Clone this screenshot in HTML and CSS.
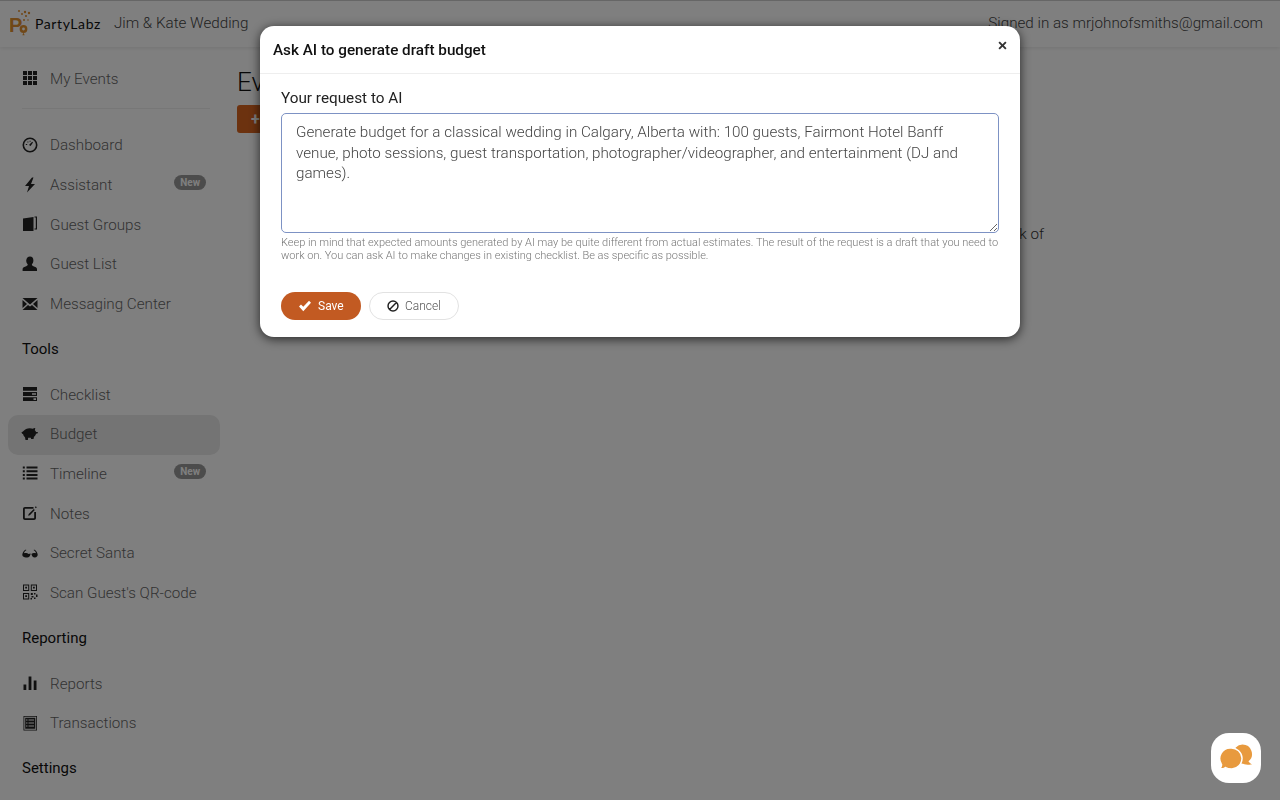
FILE: index.html
```html
<!DOCTYPE html>
<html>
<head>
    <title>PartyLabz - Budget</title>
    <link rel="stylesheet" href="styles.css">
</head>
<body>
    <header class="topbar">
        <div class="brand">
            <svg class="brand-logo" viewBox="0 0 24 28" width="24" height="28">
                <text x="-1" y="23" class="brand-p">P</text>
                <circle cx="13.500" cy="20" r="3.900" fill="#e09030"/>
                <circle cx="13.500" cy="20" r="1.400" fill="#fff"/>
                <path d="M13.500 23.500l-1.200 2.800h2.400z" fill="#e09030"/>
                <circle cx="9" cy="2" r="1" fill="#e09030"/>
                <circle cx="12" cy="5" r="1" fill="#e09030"/>
                <circle cx="15" cy="3" r="1.200" fill="#e09030"/>
                <circle cx="19" cy="4" r="1.200" fill="#e09030"/>
                <circle cx="16" cy="7" r="1.100" fill="#e09030"/>
                <circle cx="14" cy="11" r="1" fill="#e09030"/>
                <circle cx="18" cy="11" r="0.800" fill="#e09030"/>
            </svg>
            <span class="brand-name">PartyLabz</span>
        </div>
        <div class="event-name">Jim &amp; Kate Wedding</div>
        <div class="signed-in">Signed in as mrjohnofsmiths@gmail.com</div>
    </header>

    <div class="layout">
        <nav class="sidebar">
            <a class="nav-item">
                <svg class="nav-icon" viewBox="0 0 16 16"><path d="M1 1h4v4H1zM6 1h4v4H6zM11 1h4v4h-4zM1 6h4v4H1zM6 6h4v4H6zM11 6h4v4h-4zM1 11h4v4H1zM6 11h4v4H6zM11 11h4v4h-4z"/></svg>
                My Events
            </a>
            <hr class="nav-divider">
            <a class="nav-item">
                <svg class="nav-icon" viewBox="0 0 16 16"><path fill-rule="evenodd" d="M8 .5a7.500 7.500 0 1 1 0 15A7.500 7.500 0 0 1 8 .5zm0 1.600a5.900 5.900 0 1 0 0 11.800A5.900 5.900 0 0 0 8 2.100z"/><path d="M7 8l3.200-3.200.8.6L8.600 9zM3.800 7h1.400v1H3.800zM5.400 4.600h1v1h-1zM7.600 3.800h1v1h-1z"/></svg>
                Dashboard
            </a>
            <a class="nav-item">
                <svg class="nav-icon" viewBox="0 0 16 16"><path d="M10 .5L3 9h4L5 15.500l8-8.500H9l2.500-6.500z"/></svg>
                Assistant
                <span class="nav-badge">New</span>
            </a>
            <a class="nav-item">
                <svg class="nav-icon" viewBox="0 0 16 16"><path d="M1 2.500L11.500 1v14H1zM12.500 .5h2.500v13h-2.500v-1h1.300V1.500h-1.300z"/></svg>
                Guest Groups
            </a>
            <a class="nav-item">
                <svg class="nav-icon" viewBox="0 0 16 16"><path d="M8 .5c2.200 0 3.400 1.600 3.400 3.900 0 1.500-.6 3-1.500 3.900 0 1 .4 1.500 1.500 2 1.700.7 3.600 1.200 3.600 2.600V15H.6v-2.100c0-1.400 1.900-1.900 3.600-2.600 1.100-.5 1.500-1 1.500-2-.9-.9-1.500-2.400-1.500-3.900C4.600 2.100 5.800.5 8 .5z"/></svg>
                Guest List
            </a>
            <a class="nav-item">
                <svg class="nav-icon" viewBox="0 0 16 16"><path d="M.5 2h15L8 8.500zM.5 4L5 8 .5 12zM15.500 4L11 8l4.500 4zM6 8.900l2 1.600 2-1.600 5.500 5.100H.5z"/></svg>
                Messaging Center
            </a>

            <div class="nav-heading">Tools</div>
            <a class="nav-item">
                <svg class="nav-icon" viewBox="0 0 16 16"><path fill-rule="evenodd" d="M1 1h14v3.800H1zM1 6.100h14v3.800H1zM1 11.200h14v3.800H1zM10 7.200v1.600h4V7.200zM11.500 12.300v1.600H14v-1.600z"/></svg>
                Checklist
            </a>
            <a class="nav-item active">
                <svg class="nav-icon nav-icon-wide" viewBox="0 0 18 16"><path d="M.5 6.200c.8 0 1.400-.4 2-1.100C3.800 3.300 6 2.200 8.800 2.200c1.200 0 2.200.2 3 .5.700-.6 1.700-.9 2.500-.8l-.5 2.300c.7.600 1 1.100 1.200 1.800h1.800v1.200l-1.800.6c-.3 1.300-1.100 2.300-2 2.900l-.5 2.300h-2.400l-.2-1.300c-.8.200-1.900.2-2.800 0L6.900 14H4.500L4 11.200C2.900 10.400 2.300 9.300 2.100 8 1.400 8 .7 7.300.5 6.200z"/></svg>
                Budget
            </a>
            <a class="nav-item">
                <svg class="nav-icon" viewBox="0 0 16 16"><path d="M.8 1.500h2v2h-2zM4.500 1.500H15.500v2H4.500zM.8 5.200h2v2h-2zM4.500 5.200H15.500v2H4.500zM.8 8.900h2v2h-2zM4.500 8.900H15.500v2H4.500zM.8 12.600h2v2h-2zM4.500 12.600H15.500v2H4.500z"/></svg>
                Timeline
                <span class="nav-badge">New</span>
            </a>
            <a class="nav-item">
                <svg class="nav-icon" viewBox="0 0 16 16"><path d="M3 2h8.500v1.800H3.200c-.3 0-.4.100-.4.400v8.600c0 .3.100.4.400.4h8.600c.3 0 .4-.1.400-.4V7H14v6c0 1.200-.8 2-2 2H3c-1.200 0-2-.8-2-2V4c0-1.200.8-2 2-2z"/><path d="M11.800 4l1 1-4.900 5.200-1.800.6.600-1.800zM13.800 1.300l1 1-.9.9-1-1z"/></svg>
                Notes
            </a>
            <a class="nav-item">
                <svg class="nav-icon" viewBox="0 0 16 16"><path d="M.3 9.500C.6 7.500 2 5 4 4.500l.3.800C3 5.800 2.300 7 2 8.200c1.500-.3 3.500-.2 4.500.8 1-.5 2-.5 3 0 1-1 3-1.100 4.500-.8-.3-1.200-1-2.400-2.300-2.900l.3-.8c2 .5 3.400 3 3.700 5 0 1.600-1 3-2.900 3-2 0-3.100-1.500-3.100-3.200-.5-.2-.9-.2-1.400 0 0 1.700-1.100 3.200-3.100 3.200C1.300 12.500.3 11.100.3 9.500z"/></svg>
                Secret Santa
            </a>
            <a class="nav-item">
                <svg class="nav-icon" viewBox="0 0 16 16"><path fill-rule="evenodd" d="M1 .5h6.200v6.500H1zM2 1.500V6h4.200V1.500zM3.200 2.800h1.800v1.800H3.200zM8.800 .5H15v6.500H8.800zM9.800 1.500V6H14V1.500zM11 2.800h1.800v1.800H11zM1 9h6.200v6.500H1zM2 10v4.500h4.200V10zM3.200 11.300h1.800v1.800H3.200zM8.800 9h2v2h-2zM12 9h1.500v1.500H12zM14 10.500h1.500V13H14zM9.500 12h2v1.500h-2zM12 13.500h1.500V15H12zM8.500 14h1.500v1.500H8.500z"/></svg>
                Scan Guest's QR-code
            </a>

            <div class="nav-heading">Reporting</div>
            <a class="nav-item">
                <svg class="nav-icon" viewBox="0 0 16 16"><path d="M1.500 9.500h2.800V15H1.500zM6.600 1.500h2.800V15H6.600zM11.700 5.500h2.800V15h-2.800z"/></svg>
                Reports
            </a>
            <a class="nav-item">
                <svg class="nav-icon" viewBox="0 0 16 16"><path fill-rule="evenodd" d="M1.500 1h13.500v14.500H1.500zM2.300 1.800v12.900h11.900V1.800zM3.200 2.800h10.100v11H3.200zM4 4.500v1h1.500v-1zM6.500 4.500v1H12v-1zM4 7.500v1h1.500v-1zM6.500 7.500v1H12v-1zM4 10.500v1h1.500v-1zM6.500 10.500v1H12v-1z"/></svg>
                Transactions
            </a>

            <div class="nav-heading">Settings</div>
        </nav>

        <main class="content">
            <h1 class="page-title">Event Budget</h1>
            <button class="add-btn">+ Add</button>
            <p class="empty-text">Ask AI to prepare a first draft or add your own items to keep track of</p>
        </main>
    </div>

    <div class="backdrop"></div>

    <div class="modal">
        <div class="modal-header">
            <h2 class="modal-title">Ask AI to generate draft budget</h2>
            <svg class="modal-close" viewBox="0 0 10 10" width="9" height="9"><path d="M2 .5L5 3.500 8 .5 9.500 2 6.500 5l3 3L8 9.500l-3-3-3 3L.5 8l3-3-3-3z"/></svg>
        </div>
        <div class="modal-body">
            <label class="field-label" for="request">Your request to AI</label>
            <textarea class="field-input" id="request">Generate budget for a classical wedding in Calgary, Alberta with: 100 guests, Fairmont Hotel Banff venue, photo sessions, guest transportation, photographer/videographer, and entertainment (DJ and games).</textarea>
            <p class="field-hint">Keep in mind that expected amounts generated by AI may be quite different from actual estimates. The result of the request is a draft that you need to work on. You can ask AI to make changes in existing checklist. Be as specific as possible.</p>
            <div class="modal-actions">
                <button class="btn btn-save">
                    <svg viewBox="0 0 16 14" width="14" height="12"><path d="M1 7.500L3.300 5.200 6 7.900 12.700 1 15 3.300 6 13z" fill="#fff"/></svg>
                    Save
                </button>
                <button class="btn btn-cancel">
                    <svg viewBox="0 0 14 14" width="12" height="12"><path fill="none" stroke="#222" stroke-width="1.700" d="M7 1.200a5.800 5.800 0 1 0 0 11.600A5.800 5.800 0 0 0 7 1.200zM3 11l8-8"/></svg>
                    Cancel
                </button>
            </div>
        </div>
    </div>

    <div class="chat-widget">
        <svg viewBox="0 0 34 28" width="34" height="28">
            <path d="M23.500 .5a9.500 9.500 0 0 1 6 16.800c.4 1 1.800 2.200 3.500 3.200-3 .3-6.500.1-9-.8a9.500 9.500 0 0 1-.5-19.200z" fill="#e89a3e"/>
            <path d="M12 4a10.500 10.500 0 0 1 1 21c-3 0-5-.5-6.500-1.500C5 24.500 3 25 .5 24.800c1.200-1 2.200-2.800 2-4.500A10.500 10.500 0 0 1 12 4z" fill="#e89a3e" stroke="#fff" stroke-width="1.500"/>
        </svg>
    </div>
</body>
</html>
```

FILE: styles.css
```css
* {
    box-sizing: border-box;
}

html, body {
    height: 100%;
}

body {
    margin: 0;
    font-family: Roboto, Arial, sans-serif;
    font-weight: 300;
    font-size: 15.2px;
    color: #222;
    background-color: #fff;
    overflow: hidden;
}

.topbar {
    display: flex;
    align-items: center;
    height: 47px;
    padding: 0 17px 2px 10px;
    background-color: #fff;
    border-top: 1px solid #ccc;
    box-shadow: 0 1px 4px rgba(0, 0, 0, 0.1);
}

.brand {
    display: flex;
    align-items: center;
}

.brand-logo {
    display: block;
}

.brand-p {
    font-family: "Liberation Sans", sans-serif;
    font-weight: 700;
    font-size: 20px;
    fill: #e09030;
}

.brand-name {
    margin-left: 1px;
    font-family: Lato, sans-serif;
    font-weight: 400;
    font-size: 14px;
    letter-spacing: 0.6px;
    color: #111;
}

.event-name {
    margin-left: 13px;
    color: #444;
}

.signed-in {
    margin-left: auto;
    color: #444;
}

.layout {
    display: flex;
}

.sidebar {
    width: 230px;
    flex-shrink: 0;
    padding: 13px 8px 0 8px;
    height: 753px;
    overflow: hidden;
}

.nav-item {
    position: relative;
    display: flex;
    align-items: center;
    width: 212px;
    height: 39.65px;
    padding: 0 0 2px 14px;
    color: #666;
    border-radius: 10px;
}

.nav-item.active {
    background-color: #e8e8e8;
}

.nav-icon {
    width: 16px;
    height: 16px;
    margin-right: 12px;
    margin-top: -1px;
    fill: #222;
    flex-shrink: 0;
}

.nav-icon-wide {
    width: 18px;
    margin-left: -1px;
    margin-right: 11px;
}

.nav-badge {
    position: absolute;
    right: 14px;
    top: 9px;
    padding: 0 6px;
    height: 15px;
    line-height: 15px;
    border-radius: 8px;
    background-color: #999;
    color: #fff;
    font-size: 10px;
    font-weight: 700;
}

.nav-divider {
    width: 188px;
    margin: 8px 0 18px 14px;
    border: none;
    border-top: 1px solid #eee;
}

.nav-heading {
    height: 51px;
    padding: 15px 0 0 14px;
    font-weight: 400;
    font-size: 15px;
    color: #111;
}

.content {
    flex: 1;
    padding: 18px 0 0 7px;
}

.page-title {
    margin: 0 0 6px 0;
    font-weight: 300;
    font-size: 26px;
    line-height: 34px;
    color: #111;
}

.add-btn {
    display: block;
    height: 28px;
    padding: 0 14px;
    border: none;
    border-radius: 3px;
    background-color: #d9641f;
    color: #fff;
    font-family: Roboto, Arial, sans-serif;
    font-weight: 700;
    font-size: 16px;
}

.empty-text {
    width: 807px;
    margin: 91px 0 0 0;
    text-align: right;
    line-height: 20px;
    color: #333;
}

.backdrop {
    position: fixed;
    left: 0;
    top: 0;
    right: 0;
    bottom: 0;
    background-color: rgba(0, 0, 0, 0.5);
}

.modal {
    position: fixed;
    left: 260px;
    top: 26px;
    width: 760px;
    background-color: #fff;
    border-radius: 14px;
    box-shadow: 0 2px 11px rgba(0, 0, 0, 0.7);
}

.modal-header {
    display: flex;
    align-items: center;
    justify-content: space-between;
    height: 48px;
    padding: 0 13px;
    border-bottom: 1px solid #eee;
}

.modal-title {
    margin: 0;
    font-weight: 500;
    font-size: 15.25px;
    color: #111;
}

.modal-close {
    fill: #333;
    margin-top: -8px;
}

.modal-body {
    padding: 14px 21px 17px 21px;
}

.field-label {
    display: block;
    height: 25px;
    font-weight: 400;
    font-size: 15.3px;
    line-height: 20px;
    color: #222;
}

.field-input {
    display: block;
    width: 100%;
    height: 120px;
    padding: 8px 14px;
    border: 1px solid #7d92c4;
    border-radius: 5px;
    outline: none;
    font-family: Roboto, Arial, sans-serif;
    font-weight: 300;
    font-size: 15.2px;
    line-height: 20.5px;
    color: #444;
}

.field-hint {
    margin: 3px 0 0 0;
    font-size: 11px;
    font-weight: 300;
    line-height: 13px;
    color: #777;
}

.modal-actions {
    display: flex;
    gap: 8px;
    margin-top: 30px;
}

.btn {
    display: flex;
    align-items: center;
    gap: 6px;
    height: 28px;
    border-radius: 15px;
    font-family: Roboto, Arial, sans-serif;
    font-weight: 300;
    font-size: 12px;
}

.btn-save {
    width: 80px;
    padding: 0 0 0 17px;
    border: none;
    background-color: #c25a22;
    color: #fff;
    font-weight: 400;
}

.btn-cancel {
    width: 90px;
    padding: 0 0 0 17px;
    border: 1px solid #e2e2e2;
    background-color: #fff;
    color: #555;
}

.chat-widget {
    position: fixed;
    left: 1211px;
    top: 733px;
    display: flex;
    align-items: center;
    justify-content: center;
    width: 50px;
    height: 50px;
    border-radius: 18px;
    background-color: #fff;
}
```
